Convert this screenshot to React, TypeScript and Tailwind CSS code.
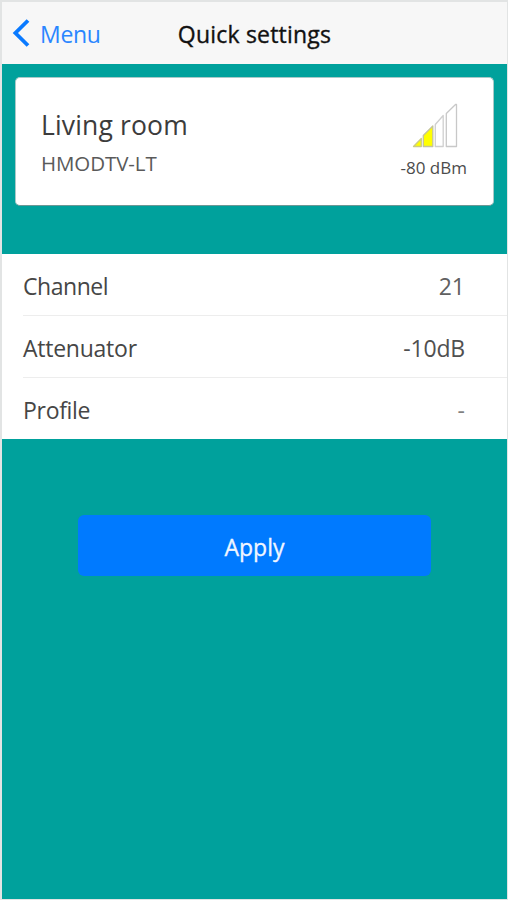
const settings = [
  { label: "Channel", value: "21", labelClass: "tracking-[-0.45px]", valueClass: "text-[#606060]" },
  { label: "Attenuator", value: "-10dB", labelClass: "tracking-[-0.25px]", valueClass: "tracking-[-0.2px] text-[#505050]" },
  { label: "Profile", value: "-", labelClass: "tracking-[-0.3px]", valueClass: "text-[#808080]" },
];

function SignalIcon() {
  return (
    <svg className="block" width="46" height="45" viewBox="0 0 46 45" fill="none" strokeWidth="1.3" strokeLinejoin="round">
      <path d="M1.5 43.5L9.3 35.5V43.5Z" fill="#ffff00" stroke="#cccc84" />
      <path d="M11.3 43.5V32.5L20.8 23V43.5Z" fill="#ffff00" stroke="#c4c49c" />
      <path d="M23.3 43.5V21.5L31.2 12.5V43.5Z" fill="#fff" stroke="#cfcfcf" />
      <path d="M34.3 43.5V10.5L43.5 1.5H44.5V43.5Z" fill="#fff" stroke="#c8c8c8" />
    </svg>
  );
}

export default function App() {
  return (
    <div className="h-[900px] w-[508px] overflow-hidden border-2 border-r-1 border-b-1 border-[#e2e4e4] bg-[#00a19c] font-['Open_Sans','Noto_Sans',sans-serif] text-[#3c3c3c]">
      {/* Navigation bar */}
      <header className="grid h-[62px] grid-cols-[1fr_auto_1fr] items-center bg-[#f7f7f7]">
        <button className="flex items-center pl-[10px] text-[#2a86ff]">
          <svg className="block" width="18" height="28" viewBox="0 0 18 28" fill="none">
            <path d="M16 1.5L3.4 14L16 26.5" stroke="#0a7aff" strokeWidth="3.8" />
          </svg>
          <span className="ml-[10px] pt-0.5 text-[23px] leading-8 tracking-[-0.3px]">Menu</span>
        </button>
        <h1 className="pt-0.5 text-[23px] leading-8 tracking-[0.2px] text-[#111] [-webkit-text-stroke:0.35px_#111]">
          Quick settings
        </h1>
        <span />
      </header>

      {/* Device card */}
      <section className="mx-[13px] mt-[13px] flex h-[129px] justify-between rounded-[5px] border border-[#a9c9c8] border-b-[#6d9795] bg-white pr-[26px] pl-[25px]">
        <div className="pt-[29px]">
          <h2 className="text-[26.5px] leading-9 tracking-[0.15px]">Living room</h2>
          <p className="mt-[6px] text-[20.5px] leading-7 tracking-[-0.1px] text-[#5a5a5a]">HMODTV-LT</p>
        </div>
        <div className="flex flex-col items-end pt-[25px]">
          <div className="mr-[9px]">
            <SignalIcon />
          </div>
          <p className="mt-[6px] text-[17px] leading-7 text-[#4c4c4c]">-80 dBm</p>
        </div>
      </section>

      {/* Settings list */}
      <ul className="mt-[48px] h-[185px] bg-white pl-[21px]">
        {settings.map((item) => (
          <li
            key={item.label}
            className="flex h-[62px] items-center justify-between border-b border-[#ededed] pt-0.5 pr-[42px] text-[23px] leading-8 text-[#464646] last:border-b-0"
          >
            <span className={item.labelClass}>{item.label}</span>
            <span className={item.valueClass}>{item.value}</span>
          </li>
        ))}
      </ul>

      <button className="mx-auto mt-[76px] flex h-[61px] w-[353px] items-center justify-center rounded-md bg-[#007aff] pt-1 text-[23px] text-[#f0f6ff] [-webkit-text-stroke:0.3px_#f0f6ff]">
        Apply
      </button>
    </div>
  );
}
